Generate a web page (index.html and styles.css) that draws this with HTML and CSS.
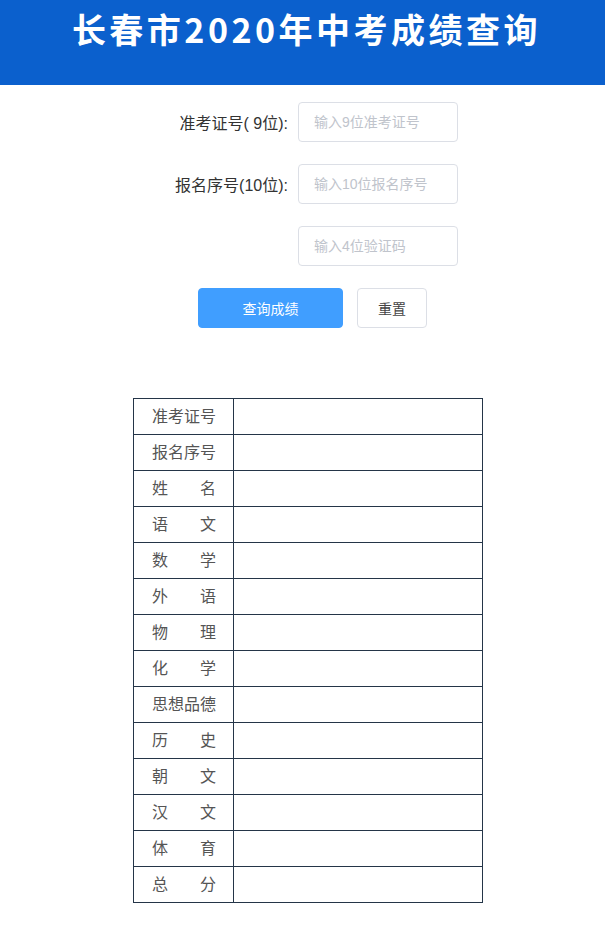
FILE: index.html
```html
<!DOCTYPE html>
<html lang="zh-CN">
<head>
<meta charset="utf-8">
<title>长春市2020年中考成绩查询</title>
<link rel="stylesheet" href="styles.css">
</head>
<body>
<header class="banner">
  <h1 class="title">长春市2020年中考成绩查询</h1>
</header>
<form class="query-form">
  <label class="field-label">准考证号( 9位):</label>
  <input class="field-input" type="text" placeholder="输入9位准考证号">
  <label class="field-label">报名序号(10位):</label>
  <input class="field-input" type="text" placeholder="输入10位报名序号">
  <span class="field-label"></span>
  <input class="field-input" type="text" placeholder="输入4位验证码">
  <div class="actions">
    <button type="button" class="btn btn-primary">查询成绩</button>
    <button type="button" class="btn btn-default">重置</button>
  </div>
</form>
<table class="result">
  <tbody>
    <tr><td class="key"><span class="j">准考证号</span></td><td></td></tr>
    <tr><td class="key"><span class="j">报名序号</span></td><td></td></tr>
    <tr><td class="key"><span class="j">姓 名</span></td><td></td></tr>
    <tr><td class="key"><span class="j">语 文</span></td><td></td></tr>
    <tr><td class="key"><span class="j">数 学</span></td><td></td></tr>
    <tr><td class="key"><span class="j">外 语</span></td><td></td></tr>
    <tr><td class="key"><span class="j">物 理</span></td><td></td></tr>
    <tr><td class="key"><span class="j">化 学</span></td><td></td></tr>
    <tr><td class="key"><span class="j">思想品德</span></td><td></td></tr>
    <tr><td class="key"><span class="j">历 史</span></td><td></td></tr>
    <tr><td class="key"><span class="j">朝 文</span></td><td></td></tr>
    <tr><td class="key"><span class="j">汉 文</span></td><td></td></tr>
    <tr><td class="key"><span class="j">体 育</span></td><td></td></tr>
    <tr><td class="key"><span class="j">总 分</span></td><td></td></tr>
  </tbody>
</table>
</body>
</html>
```
FILE: styles.css
```css
* { box-sizing: border-box; }
html, body { margin: 0; padding: 0; background: #fff; }
body {
  font-family: "Liberation Sans", "Noto Sans CJK SC", sans-serif;
  color: #333;
}
.banner {
  background: #0b60cd;
  height: 85px;
  padding-top: 7px;
  text-align: center;
}
.title {
  margin: 0;
  color: #fff;
  font-family: "Noto Sans CJK SC", "Liberation Sans", sans-serif;
  font-size: 34px;
  font-weight: 700;
  line-height: 44px;
  letter-spacing: 3.5px;
  padding-left: 8px;
}
.query-form {
  width: 311px;
  margin: 17px auto 0;
  display: grid;
  grid-template-columns: 1fr 160px;
  column-gap: 10px;
  row-gap: 22px;
  align-items: center;
}
.field-label {
  text-align: right;
  font-size: 16px;
  color: #333;
}
.field-input {
  height: 40px;
  width: 160px;
  border: 1px solid #dcdfe6;
  border-radius: 4px;
  padding: 0 15px;
  font-family: inherit;
  font-size: 14px;
  color: #333;
  outline: none;
}
.field-input::placeholder { color: #c0c4cc; }
.actions {
  grid-column: 1 / -1;
  display: flex;
  gap: 14px;
  padding-left: 51px;
}
.btn {
  height: 40px;
  border-radius: 4px;
  font-family: inherit;
  font-size: 14px;
  cursor: pointer;
}
.btn-primary {
  width: 145px;
  background: #409eff;
  border: 1px solid #409eff;
  color: #fff;
}
.btn-default {
  width: 70px;
  background: #fff;
  border: 1px solid #dcdfe6;
  color: #444;
}
.result {
  margin: 70px 0 0 133px;
  width: 350px;
  border-collapse: collapse;
  border: 1px solid #243548;
}
.result td {
  border: 1px solid #243548;
  height: 36px;
  padding: 0;
}
.result td.key {
  width: 100px;
  padding: 0 17px 0 18px;
  font-size: 16px;
  color: #555;
}
.j {
  display: block;
  text-align: justify;
  text-align-last: justify;
  line-height: 20px;
}
```
